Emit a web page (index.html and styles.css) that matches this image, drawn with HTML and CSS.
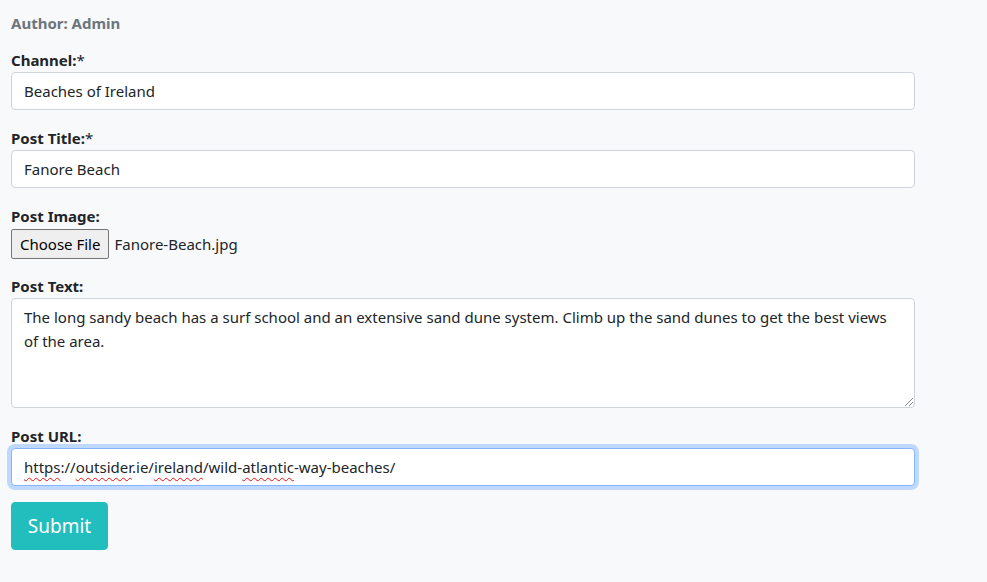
FILE: index.html
```html
<!DOCTYPE html>
<html lang="en">
<head>
<meta charset="utf-8">
<title>New Post</title>
<link rel="stylesheet" href="styles.css">
</head>
<body>
<main class="page">
  <p class="author">Author: Admin</p>
  <form class="post-form">
    <div class="group">
      <label class="label">Channel:<span class="req">*</span></label>
      <div class="control">Beaches of Ireland</div>
    </div>
    <div class="group">
      <label class="label">Post Title:<span class="req">*</span></label>
      <div class="control">Fanore Beach</div>
    </div>
    <div class="group">
      <label class="label">Post Image:</label>
      <div class="file-row">
        <button type="button" class="file-btn">Choose File</button>
        <span class="file-name">Fanore-Beach.jpg</span>
      </div>
    </div>
    <div class="group">
      <label class="label">Post Text:</label>
      <div class="control textarea">The long sandy beach has a surf school and an extensive sand dune system. Climb up the sand dunes to get the best views of the area.<span class="grip"></span></div>
    </div>
    <div class="group">
      <label class="label">Post URL:</label>
      <div class="control focused"><span class="sp">https</span>://<span class="sp">outsider</span>.ie/<span class="sp">ireland</span>/wild-<span class="sp">atlantic</span>-way-beaches/</div>
    </div>
    <button type="button" class="submit">Submit</button>
  </form>
</main>
</body>
</html>
```
FILE: styles.css
```css
html, body {
  margin: 0;
  padding: 0;
  background: #f8f9fa;
}
body {
  font-family: "Noto Sans", "Open Sans", sans-serif;
  font-size: 15px;
  line-height: 24px;
  color: #212529;
  width: 987px;
  height: 582px;
  overflow: hidden;
}
.page {
  padding: 11px 72px 0 11px;
}
.author {
  margin: 0 0 13px;
  font-weight: 700;
  color: #6c757d;
}
.post-form {
  display: flex;
  flex-direction: column;
}
.group {
  display: flex;
  flex-direction: column;
  margin-bottom: 16px;
}
.label {
  font-weight: 700;
  height: 24px;
}
.req {
  font-weight: 400;
}
.control {
  position: relative;
  box-sizing: border-box;
  height: 38px;
  padding: 6px 12px;
  background: #fff;
  border: 1px solid #ced4da;
  border-radius: 4px;
  white-space: nowrap;
}
.control.textarea {
  height: 110px;
  white-space: normal;
  line-height: 24px;
  padding-top: 6px;
}
.grip {
  position: absolute;
  right: 1px;
  bottom: 1px;
  width: 8px;
  height: 8px;
  background: linear-gradient(135deg, transparent 45%, #888 46%, #888 52%, transparent 53%, transparent 70%, #888 71%, #888 77%, transparent 78%);
}
.control.focused {
  border-color: #86b7fe;
  box-shadow: 0 0 0 4px #bfd8fd;
}
.sp {
  text-decoration: underline wavy #e81010;
  text-decoration-thickness: 1px;
  text-underline-offset: 4px;
}
.file-row {
  display: flex;
  align-items: center;
  height: 30px;
  padding-top: 1px;
  box-sizing: border-box;
}
.file-btn {
  font: inherit;
  color: #000;
  height: 30px;
  padding: 0 8px;
  margin-right: 5px;
  background: #efefef;
  border: 1px solid #767676;
  border-radius: 2px;
}
.submit {
  align-self: flex-start;
  box-sizing: border-box;
  width: 97px;
  height: 48px;
  font: inherit;
  font-size: 19px;
  color: #fff;
  background: #22bdbd;
  border: 1px solid #22bdbd;
  border-radius: 4px;
}
```
